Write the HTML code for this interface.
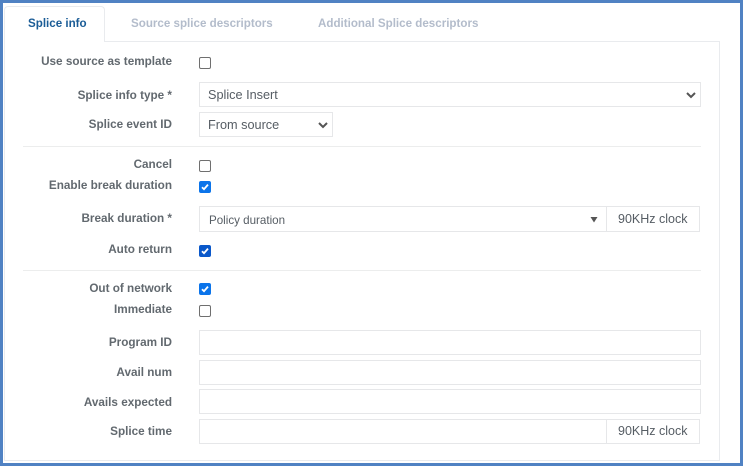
<!DOCTYPE html>
<html><head><meta charset="utf-8"><style>
html,body{margin:0;padding:0;background:#fff}
body{width:743px;height:466px;position:relative;overflow:hidden;font-family:"Liberation Sans",Arial,sans-serif;font-size:12px;color:#6c757d}
div,span{position:absolute;box-sizing:border-box}
.frame{left:0;top:0;width:743px;height:466px;border:3px solid #5082c3}
.panel{left:4px;top:41px;width:716px;height:420px;border:1px solid #e9ebee}
.tab{left:4px;top:6px;width:101px;height:36px;background:#fff;border:1px solid #e9ebee;border-bottom:0;border-radius:4px 4px 0 0}
.t{font-weight:bold;font-size:11.6px;top:17px;line-height:14px;white-space:nowrap;color:#b3bccb}
.l{right:571px;margin-top:1px;font-weight:bold;font-size:11.73px;line-height:14px;white-space:nowrap;color:#62696f}
.b{background:#fff;border:1px solid #e6e7e9;left:199px;width:502px;height:25px;line-height:25px;color:#565d64;white-space:nowrap;font-size:12.7px}
.b .v{left:8px;top:0}
.c{left:199px;width:12px;height:12px;border:1px solid #6f6f6f;border-radius:2px;background:#fff}
.k{left:199px;width:12px;height:12px;border-radius:2px;background:#0b74ea}
.k.d{background:#0a58ca}
.k svg{position:absolute;left:0;top:0}
.h{left:23px;width:678px;height:1px;background:#eceded}
</style></head><body>
<div class="frame"></div>
<div class="panel"></div>
<div class="tab"></div>
<div class="t" style="left:28px;color:#1a5c96">Splice info</div>
<div class="t" style="left:131px">Source splice descriptors</div>
<div class="t" style="left:318px">Additional Splice descriptors</div>

<div class="l" style="top:54px">Use source as template</div>
<div class="c" style="top:57px"></div>

<div class="l" style="top:88px">Splice info type *</div>
<div class="b" style="top:82px;height:25px"><span class="v">Splice Insert</span>
<svg style="position:absolute;left:486px;top:8px" width="10" height="8" viewBox="0 0 10 8"><path d="M1 2l4 4 4-4" fill="none" stroke="#555" stroke-width="2"/></svg></div>

<div class="l" style="top:117px">Splice event ID</div>
<div class="b" style="top:112px;width:134px"><span class="v">From source</span>
<svg style="position:absolute;left:118px;top:8px" width="10" height="8" viewBox="0 0 10 8"><path d="M1 2l4 4 4-4" fill="none" stroke="#555" stroke-width="2"/></svg></div>

<div class="h" style="top:146px"></div>

<div class="l" style="top:157px">Cancel</div>
<div class="c" style="top:160px"></div>

<div class="l" style="top:178px">Enable break duration</div>
<div class="k" style="top:181px"><svg width="12" height="12" viewBox="0 0 12 12"><path d="M3 6.2l2 2 4-4.6" fill="none" stroke="#fff" stroke-width="1.8"/></svg></div>

<div class="l" style="top:211px">Break duration *</div>
<div class="b" style="top:206px;width:408px;height:26px;line-height:27px;font-size:11.6px"><span class="v" style="left:9px">Policy duration</span>
<svg style="position:absolute;left:390px;top:9px" width="8" height="7" viewBox="0 0 8 7"><path d="M0.5 1h7L4 6.5z" fill="#555"/></svg></div>
<div class="b" style="top:206px;left:606px;width:94px;height:26px;line-height:24px;font-size:12.5px"><span class="v" style="left:11px">90KHz clock</span></div>

<div class="l" style="top:242px">Auto return</div>
<div class="k d" style="top:245px"><svg width="12" height="12" viewBox="0 0 12 12"><path d="M3 6.2l2 2 4-4.6" fill="none" stroke="#fff" stroke-width="1.8"/></svg></div>

<div class="h" style="top:270px"></div>

<div class="l" style="top:281px">Out of network</div>
<div class="k" style="top:283px"><svg width="12" height="12" viewBox="0 0 12 12"><path d="M3 6.2l2 2 4-4.6" fill="none" stroke="#fff" stroke-width="1.8"/></svg></div>

<div class="l" style="top:302px">Immediate</div>
<div class="c" style="top:305px"></div>

<div class="l" style="top:335px">Program ID</div>
<div class="b" style="top:330px"></div>
<div class="l" style="top:365px">Avail num</div>
<div class="b" style="top:360px"></div>
<div class="l" style="top:395px">Avails expected</div>
<div class="b" style="top:389px"></div>
<div class="l" style="top:424px">Splice time</div>
<div class="b" style="top:419px;width:408px"></div>
<div class="b" style="top:419px;left:606px;width:94px;line-height:23px;font-size:12.5px"><span class="v" style="left:11px">90KHz clock</span></div>
</body></html>
